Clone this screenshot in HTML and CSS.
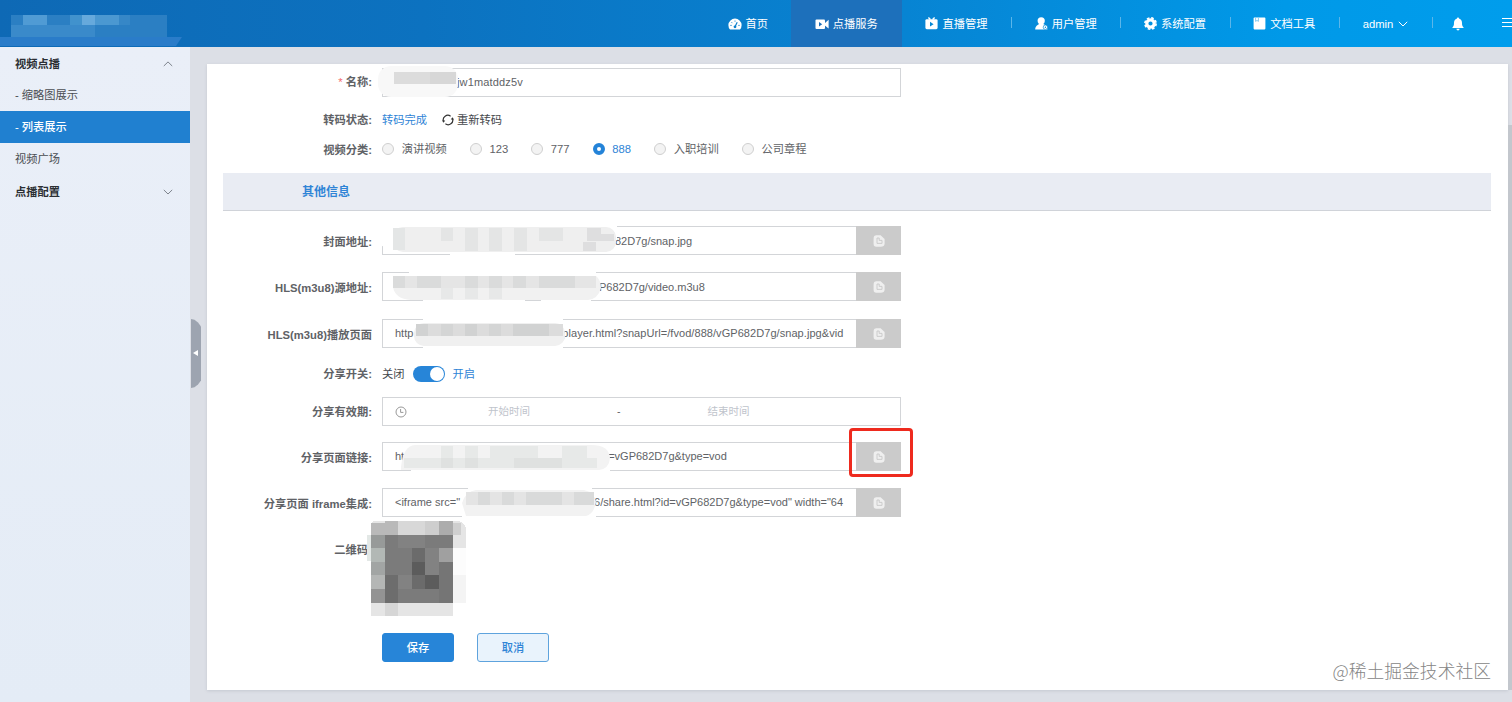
FILE: index.html
```html
<!doctype html>
<html lang="zh-CN">
<head>
    <meta charset="UTF-8">
    <title>点播服务</title>
    <link rel="stylesheet" href="styles.css">
</head>
<body>
    <svg width="0" height="0" class="defs">
        <symbol id="copy" viewBox="0 0 12 12">
            <path d="M3 0.2H7.6L11.6 4V8.4Q11.4 11.6 7.8 11.8H3.2Q0.6 11.6 0.6 9V3Q0.6 0.4 3 0.2Z" fill="#efefef"/>
            <path d="M4 3H6.2V5.4H9V8.4H4Z" fill="none" stroke="#c8c8c8" stroke-width="0.9"/>
        </symbol>
    </svg>
<!--    header-->
    <div class="header">
        <svg class="logo" width="184" height="47">
            <path d="M0 37H182L176 46H0Z" fill="#2a7cc9"/>
            <rect x="11" y="15" width="156" height="22" fill="#2b7fc3"/>
            <rect x="11" y="25" width="84" height="12" fill="#3a8aca"/>
            <rect x="23" y="15" width="24" height="10" fill="#509bd4"/>
            <rect x="70" y="15" width="12" height="10" fill="#4192cd"/>
            <rect x="82" y="15" width="13" height="10" fill="#66a9dc"/>
            <rect x="95" y="15" width="24" height="10" fill="#4b98d1"/>
            <rect x="119" y="15" width="11" height="10" fill="#3687c7"/>
        </svg>
        <div class="nav">
            <div class="nav-item first">
                <svg width="14" height="12" viewBox="0 0 14 12">
                    <path d="M2 11.5A6.6 6.6 0 1 1 12 11.5Z" fill="#fff"/>
                    <path d="M7 8.8L9.2 4.2" stroke="#0b7fcd" stroke-width="1.2"/>
                    <circle cx="7" cy="8.8" r="1.4" fill="#0b7fcd"/>
                    <path d="M2.4 7.4H3.6M3.6 4.3L4.4 5.1M7 2.6V3.6M10.4 7.4H11.6" stroke="#0b7fcd"/>
                </svg>
                <span>首页</span>
            </div>
            <div class="nav-item active">
                <svg width="14" height="12" viewBox="0 0 14 12">
                    <rect x="0.5" y="1.5" width="9.5" height="9.5" rx="1" fill="#fff"/>
                    <path d="M9.8 5.2L13.6 1.8V10.6L9.8 7.4Z" fill="#fff"/>
                    <path d="M4 4L7.2 6.2L4 8.4Z" fill="#1d6fba"/>
                </svg>
                <span>点播服务</span>
            </div>
            <div class="nav-item">
                <svg width="13" height="13" viewBox="0 0 13 13">
                    <path d="M3.4 0.6L5.4 2.6M9.6 0.6L7.6 2.6" stroke="#fff" stroke-width="1.4"/>
                    <rect x="0.4" y="2.2" width="12.2" height="10" rx="1.4" fill="#fff"/>
                    <path d="M5 4.8L8.6 7.2L5 9.6Z" fill="#0789d6"/>
                </svg>
                <span>直播管理</span>
            </div>
            <div class="nav-item line">
                <svg width="13" height="13" viewBox="0 0 13 13">
                    <circle cx="6.2" cy="3.8" r="3.6" fill="#fff"/>
                    <path d="M0.2 12.4C0.4 8.8 2.6 8.4 4.4 6.8H8C9.6 8 12 8.6 12.4 12.4Z" fill="#fff"/>
                    <circle cx="10.4" cy="10.2" r="2.2" fill="#fff" stroke="#058cda" stroke-width="0.7"/>
                    <circle cx="10.4" cy="10.2" r="0.7" fill="#058cda"/>
                </svg>
                <span>用户管理</span>
            </div>
            <div class="nav-item line">
                <svg width="13" height="13" viewBox="0 0 13 13">
                    <circle cx="6.5" cy="6.5" r="3.7" fill="none" stroke="#fff" stroke-width="3.2"/>
                    <circle cx="6.5" cy="6.5" r="5.6" fill="none" stroke="#fff" stroke-width="1.7" stroke-dasharray="2.6 1.8"/>
                </svg>
                <span>系统配置</span>
            </div>
            <div class="nav-item line">
                <svg width="13" height="13" viewBox="0 0 13 13">
                    <rect x="0.6" y="0.6" width="11.8" height="11.8" rx="0.8" fill="#fff"/>
                    <path d="M2.6 1V4.4L4 3.4L5.4 4.4V1" fill="none" stroke="#69bcea" stroke-width="0.8"/>
                </svg>
                <span>文档工具</span>
            </div>
            <div class="nav-item line user">
                <span>admin</span>
                <svg width="10" height="6" viewBox="0 0 10 6">
                    <path d="M0.8 0.8L5 5L9.2 0.8" fill="none" stroke="#fff"/>
                </svg>
            </div>
            <div class="nav-item line bell">
                <svg width="12" height="14" viewBox="0 0 12 14">
                    <path d="M6 0.5C6.6 0.5 7 1 7 1.6C9.2 2.2 10 4 10 6C10 8.8 10.6 9.4 11.6 10.4V11H0.4V10.4C1.4 9.4 2 8.8 2 6C2 4 2.8 2.2 5 1.6C5 1 5.4 0.5 6 0.5Z" fill="#fff"/>
                    <path d="M4.4 11.8H7.6A1.6 1.6 0 0 1 4.4 11.8Z" fill="#fff"/>
                </svg>
            </div>
            <div class="menu">
                <i></i>
                <i></i>
                <i></i>
            </div>
        </div>
    </div>

    <div class="wrap">
<!--        sidebar-->
        <div class="side">
            <div class="side-item title">
                <span>视频点播</span>
                <svg width="10" height="6" viewBox="0 0 10 6"><path d="M0.8 5L5 0.9L9.2 5" fill="none" stroke="#7d838c"/></svg>
            </div>
            <div class="side-item">- 缩略图展示</div>
            <div class="side-item on">- 列表展示</div>
            <div class="side-item">视频广场</div>
            <div class="side-item title">
                <span>点播配置</span>
                <svg width="10" height="6" viewBox="0 0 10 6"><path d="M0.8 0.9L5 5L9.2 0.9" fill="none" stroke="#7d838c"/></svg>
            </div>
        </div>

        <div class="main">
            <div class="handle"></div>
            <div class="card">
                <div class="row name">
                    <label><em>*</em> 名称:</label>
                    <div class="input">
                        <svg class="mask m-name" width="80" height="34">
                            <rect x="0" y="1" width="80" height="31" rx="13" fill="#f8f8f8"/>
                            <rect x="16" y="7" width="36" height="12" fill="#dcdcdc"/>
                            <rect x="52" y="7" width="26" height="12" fill="#d7d7d7"/>
                        </svg>
                        <span class="cut">jw1matddz5v</span>
                    </div>
                </div>
                <div class="row status">
                    <label>转码状态:</label>
                    <span class="blue">转码完成</span>
                    <svg class="refresh" width="12" height="12" viewBox="0 0 12 12">
                        <path d="M1.5 7.4A4.6 4.6 0 0 1 8.6 2.2M10.5 4.6A4.6 4.6 0 0 1 3.4 9.8" fill="none" stroke="#333" stroke-width="1.2"/>
                        <path d="M0 6.4H3.2L1.6 8.8ZM8.8 5.6H12L10.4 3.2Z" fill="#333"/>
                    </svg>
                    <span class="dark">重新转码</span>
                </div>
                <div class="row kind">
                    <label>视频分类:</label>
                    <div class="radios">
                        <span class="radio"><i></i>演讲视频</span>
                        <span class="radio"><i></i>123</span>
                        <span class="radio"><i></i>777</span>
                        <span class="radio checked"><i></i>888</span>
                        <span class="radio"><i></i>入职培训</span>
                        <span class="radio"><i></i>公司章程</span>
                    </div>
                </div>

                <div class="section">其他信息</div>

                <div class="row cover">
                    <label>封面地址:</label>
                    <div class="input">
                        <svg class="mask m-cover" width="236" height="33">
                            <path d="M0 0H236V16H12L0 23Z" fill="#fff"/>
                            <rect x="69" y="20" width="65" height="13" fill="#fff"/>
                            <rect x="12" y="3" width="223" height="25" rx="10" fill="#efefef"/>
                            <path d="M12 4H24V26H12Z" fill="#e4e6e6"/>
                            <path d="M60 4H72V17H60ZM84 4H97V27H84ZM108 4H121V27H108ZM133 4H146V27H133ZM158 4H182V17H158Z" fill="#e4e5e5"/>
                            <path d="M206 4H220V17H206ZM220 10H233V17H220ZM202 18H215V27H202Z" fill="#dededf"/>
                        </svg>
                        <span class="cut">82D7g/snap.jpg</span>
                    </div>
                    <button class="copy"><svg width="12" height="12"><use href="#copy"/></svg></button>
                </div>
                <div class="row hls">
                    <label>HLS(m3u8)源地址:</label>
                    <div class="input">
                        <svg class="mask m-hls" width="220" height="33">
                            <path d="M28 0H215V9H28ZM42 24H144V33H42ZM160 24H210V33H160Z" fill="#fff"/>
                            <path d="M12 6H215Q220 10 220 18Q217 29 207 30H30Q14 29 12 17Z" fill="#f1f1f1"/>
                            <path d="M12 6H215V18H12Z" fill="#e5e5e5"/>
                            <path d="M12 6H24V18H12ZM36 6H60V18H36ZM84 6H97V18H84ZM108 6H121V18H108ZM132 6H145V18H132ZM158 6H194V18H158Z" fill="#dadbdb"/>
                            <path d="M60 18H72V29H60ZM84 18H97V29H84ZM108 18H121V29H108Z" fill="#e7e8e8"/>
                        </svg>
                        <span class="cut">P682D7g/video.m3u8</span>
                    </div>
                    <button class="copy"><svg width="12" height="12"><use href="#copy"/></svg></button>
                </div>
                <div class="row play">
                    <label>HLS(m3u8)播放页面</label>
                    <div class="input">
                        <span>http</span>
                        <svg class="mask m-play" width="154" height="33">
                            <path d="M10 0H150V8H10ZM10 25H150V33H10Z" fill="#fff"/>
                            <rect x="1" y="6" width="151" height="23" rx="10" fill="#f0f0f0"/>
                            <path d="M3 7H150V19H3Z" fill="#dcdcdc"/>
                            <path d="M3 7H15V19H3ZM52 7H64V19H52ZM100 7H136V19H100Z" fill="#d1d2d2"/>
                            <path d="M28 7H40V19H28ZM76 7H88V19H76Z" fill="#d4d5d5"/>
                        </svg>
                        <span class="cut">player.html?snapUrl=/fvod/888/vGP682D7g/snap.jpg&amp;vid</span>
                    </div>
                    <button class="copy"><svg width="12" height="12"><use href="#copy"/></svg></button>
                </div>
                <div class="row switch-row">
                    <label>分享开关:</label>
                    <span class="dark">关闭</span>
                    <div class="switch"></div>
                    <span class="blue">开启</span>
                </div>
                <div class="row date">
                    <label>分享有效期:</label>
                    <div class="input range">
                        <svg width="12" height="12" viewBox="0 0 12 12">
                            <circle cx="6" cy="6" r="5" fill="none" stroke="#999"/>
                            <path d="M5.6 3V6.4H8.4" fill="none" stroke="#999"/>
                        </svg>
                        <span class="start">开始时间</span>
                        <span class="dash">-</span>
                        <span class="end">结束时间</span>
                    </div>
                </div>
                <div class="row share">
                    <label>分享页面链接:</label>
                    <div class="input">
                        <span>ht</span>
                        <svg class="mask m-share" width="209" height="33">
                            <path d="M10 20H209V33H10Z" fill="#fff"/>
                            <path d="M0 27Q2 6 14 5H190Q208 5 209 18Q208 29 198 30H0Z" fill="#f3f3f3"/>
                            <path d="M3 18H196V28H3ZM40 6H52V18H40ZM64 6H77V18H64ZM89 6H137V18H89ZM161 6H186V18H161Z" fill="#e7e9e8"/>
                            <path d="M40 18H52V28H40ZM64 18H77V28H64ZM113 18H161V28H113Z" fill="#dfe1e0"/>
                        </svg>
                        <span class="cut">=vGP682D7g&amp;type=vod</span>
                    </div>
                    <button class="copy">
                        <svg width="12" height="12"><use href="#copy"/></svg>
                        <i class="red-box"></i>
                    </button>
                </div>
                <div class="row iframe">
                    <label>分享页面 iframe集成:</label>
                    <div class="input">
                        <span>&lt;iframe src="</span>
                        <svg class="mask m-iframe" width="134" height="33">
                            <path d="M6 0H130V8H6ZM0 25H134V33H0Z" fill="#fff"/>
                            <path d="M0 17Q4 5 14 4H122Q132 6 134 16Q132 28 124 30H4Z" fill="#f2f2f2"/>
                            <path d="M4 6H128V19H4Z" fill="#e4e4e4"/>
                            <path d="M16 6H28V19H16ZM40 6H52V19H40ZM64 6H100V19H64ZM112 6H132V19H112Z" fill="#d9dada"/>
                        </svg>
                        <span class="cut">6/share.html?id=vGP682D7g&amp;type=vod" width="64</span>
                    </div>
                    <button class="copy"><svg width="12" height="12"><use href="#copy"/></svg></button>
                </div>
                <div class="row code">
                    <label>二维码</label>
                    <svg class="qr" width="99" height="96" viewBox="0 0 99 96" shape-rendering="crispEdges">
                        <path d="M0 14H4V40H0Z" fill="#e3e8e6"/>
                        <path d="M4 3Q5 0 8 0H92Q98 2 99 7V27H86V82H99V68H86V95H4Z" fill="#e5e5e5"/>
                        <path d="M86 27H99V68H86Z" fill="#fcfcfc"/>
                        <path d="M86 54H99V82H86Z" fill="#f4f4f4"/>
                        <path d="M4 2H18V14H4ZM18 0H31V14H18Z" fill="#b9b9b9"/>
                        <path d="M31 0H58V14H31Z" fill="#d8d8d8"/>
                        <path d="M58 0H72V14H58Z" fill="#cecece"/>
                        <path d="M72 0H86V14H72Z" fill="#acacac"/>
                        <path d="M86 2H94V14H86Z" fill="#cfcfcf"/>
                        <path d="M4 14H18V27H4Z" fill="#979a99"/>
                        <path d="M4 27H18V41H4Z" fill="#b2b8b5"/>
                        <path d="M4 41H18V54H4Z" fill="#a2a5a4"/>
                        <path d="M4 54H18V68H4Z" fill="#b4b6b5"/>
                        <path d="M4 68H18V82H4Z" fill="#939393"/>
                        <path d="M18 14H86V82H18Z" fill="#7b7b7b"/>
                        <path d="M18 54H31V82H18Z" fill="#6d6d6d"/>
                        <path d="M31 14H58V27H31ZM58 27H72V54H58ZM31 54H45V68H31Z" fill="#828282"/>
                        <path d="M45 27H58V41H45ZM45 54H58V68H45Z" fill="#6b6b6b"/>
                        <path d="M45 41H58V54H45ZM58 54H72V68H58Z" fill="#5c5c5c"/>
                        <path d="M72 27H86V41H72Z" fill="#a0a0a0"/>
                        <path d="M72 41H86V82H72Z" fill="#757575"/>
                        <path d="M18 82H31V95H18Z" fill="#d6d6d6"/>
                    </svg>
                </div>
                <div class="btns">
                    <button class="btn save">保存</button>
                    <button class="btn cancel">取消</button>
                </div>
            </div>
            <div class="scroll"></div>
        </div>
    </div>
    <div class="watermark">@稀土掘金技术社区</div>
</body>
</html>
```
FILE: styles.css
```css
* {
    margin: 0;
    padding: 0;
    box-sizing: border-box;
}
body {
    width: 1512px;
    height: 702px;
    overflow: hidden;
    font: 11.25px/16px "Liberation Sans", "Noto Sans CJK SC", sans-serif;
    color: #606266;
    background: #dcdfe6;
}
i, em {
    font-style: normal;
}
svg {
    display: block;
    flex-shrink: 0;
}
button {
    font: inherit;
    border: none;
}
.defs {
    position: absolute;
}

/*header start*/
.header {
    display: flex;
    justify-content: space-between;
    height: 47px;
    background: linear-gradient(90deg, #0e69b5 0%, #0c72c0 28%, #0784d3 60%, #0099e8 85%, #009dec 100%);
    box-shadow: 0 1px 1px #b9cfe6;
}
.nav {
    display: flex;
    color: #fff;
}
.nav-item {
    position: relative;
    display: flex;
    align-items: center;
    justify-content: center;
    gap: 4px;
    width: 109.3px;
    height: 47px;
}
.nav-item.first {
    width: 86px;
}
.nav-item.active {
    width: 111px;
    background: #1d70bb;
}
.nav-item.user {
    width: 93px;
    gap: 5px;
}
.nav-item.bell {
    width: 53px;
    padding-right: 1px;
}
.nav-item.line::before {
    content: "";
    position: absolute;
    left: 0;
    top: 17px;
    width: 1px;
    height: 11px;
    background: #5bb6ea;
}
.menu {
    width: 27px;
    padding: 18px 0 0 17px;
}
.menu i {
    display: block;
    height: 1px;
    margin-bottom: 3px;
    background: #fff;
}
/*header end*/

.wrap {
    display: flex;
    height: 655px;
}

/*sidebar start*/
.side {
    width: 190px;
    background: linear-gradient(180deg, #eaeff8, #e4ecf6);
    color: #4a4d52;
}
.side-item {
    display: flex;
    align-items: center;
    justify-content: space-between;
    height: 32px;
    padding: 0 17px 0 15px;
}
.side-item.title {
    height: 33px;
    font-weight: bold;
    color: #2b2e33;
}
.side-item.title:first-child {
    height: 32px;
    padding-top: 1px;
}
.side-item.on {
    color: #fff;
    font-weight: 500;
    background: #2080d0;
}
/*sidebar end*/

/*main start*/
.main {
    position: relative;
    flex: 1;
    display: flex;
    padding: 17px 0 12px 17px;
    background: #dcdfe6;
}
.handle {
    position: absolute;
    left: 1px;
    top: 272px;
    width: 10px;
    height: 69px;
    background: #9da4b0;
    clip-path: polygon(0 0, 35% 1%, 70% 5%, 100% 11%, 100% 89%, 70% 95%, 35% 99%, 0 100%);
}
.handle::after {
    content: "";
    position: absolute;
    left: 2px;
    top: 31px;
    border: 3px solid transparent;
    border-left: none;
    border-right: 5px solid #fff;
}
.card {
    width: 1301px;
    padding: 3px 17px 0 16px;
    background: #fff;
    box-shadow: 0 1px 3px #c4c8d0;
}
.scroll {
    width: 4px;
    height: 565px;
    margin-top: 61px;
    background: #c3c7cd;
}
/*main end*/

/*form start*/
.row {
    display: flex;
    align-items: center;
    height: 29px;
}
.row label {
    flex-shrink: 0;
    width: 149px;
    margin-right: 10px;
    text-align: right;
    font-weight: bold;
    white-space: nowrap;
    padding-top: 2px;
}
.row label em {
    color: #f56c6c;
    font-weight: normal;
}
.row.name {
    height: 30px;
}
.row.name label {
    padding-top: 0;
}
.row.status {
    margin-top: 8px;
}
.row.status label,
.row.switch-row label,
.row.date label {
    padding-top: 0;
}
.input {
    display: flex;
    align-items: center;
    width: 519px;
    height: 29px;
    padding: 0 12px;
    border: 1px solid #d3d5d8;
    background: #fff;
    font-size: 11px;
    white-space: pre;
}
.copy {
    position: relative;
    display: flex;
    align-items: center;
    justify-content: center;
    width: 45px;
    height: 29px;
    background: #cbcbcb;
}
.cover .input,
.hls .input,
.play .input,
.share .input,
.iframe .input {
    width: 474px;
    border-right: none;
}
.share .input span,
.iframe .input span,
.play .input span,
.range span {
    margin-top: -1px;
}
.mask {
    position: relative;
}
.cut {
    flex: 1;
    min-width: 0;
    overflow: hidden;
    margin-left: -2px;
}
.name .cut {
    margin-left: -1px;
    letter-spacing: 0.15px;
}
.m-name {
    margin-left: -17px;
}
.m-cover,
.m-hls {
    margin-left: -14px;
}
.m-play {
    margin-left: 0;
}
.play .cut {
    margin-left: -5px;
    letter-spacing: 0.06px;
}
.m-share {
    margin-left: -3px;
}
.m-iframe {
    margin-left: 2px;
}
.blue {
    color: #2f84d6;
}
.dark {
    color: #45484c;
}
.refresh {
    margin: 0 3px 0 15px;
}
.row.kind label {
    padding-top: 3px;
}
.radios {
    display: flex;
    gap: 23px;
    margin-top: 1px;
}
.radio {
    display: flex;
    align-items: center;
    gap: 7.7px;
}
.radio i {
    width: 12px;
    height: 12px;
    border: 1px solid #cfcfcf;
    border-radius: 50%;
    background: #f3f3f3;
}
.radio.checked {
    color: #2f84d6;
}
.radio.checked i {
    border: 4px solid #2483d8;
    background: #fff;
}
.section {
    height: 38px;
    margin-top: 10px;
    padding-left: 79px;
    border-bottom: 1px solid #d0d3d9;
    line-height: 38px;
    font-size: 12px;
    font-weight: bold;
    color: #2f84d6;
    background: #e9ecf3;
}
.row.cover {
    margin-top: 15px;
}
.row.hls {
    margin-top: 17px;
}
.row.play {
    margin-top: 18px;
}
.row.switch-row {
    height: 20px;
    margin-top: 16px;
}
.switch {
    width: 32px;
    height: 16px;
    margin: 0 8px;
    padding: 1px;
    border-radius: 8px;
    background: #2785d8;
}
.switch::after {
    content: "";
    display: block;
    width: 14px;
    height: 14px;
    margin-left: auto;
    border-radius: 50%;
    background: #fff;
}
.row.date {
    margin-top: 13px;
}
.range {
    color: #c0c4cc;
    font-size: 10.5px;
}
.range .start {
    margin-left: 81px;
}
.range .dash {
    margin-left: 87px;
    color: #606266;
}
.range .end {
    margin-left: 87px;
}
.row.share {
    margin-top: 16px;
}
.red-box {
    position: absolute;
    left: -7px;
    top: -14px;
    z-index: 9;
    width: 64px;
    height: 49px;
    border: 3px solid #ee2a1e;
    border-radius: 4px;
}
.row.iframe {
    margin-top: 17px;
}
.row.code {
    align-items: flex-start;
    height: 96px;
    margin-top: 4px;
}
.row.code label {
    width: 145px;
    margin-right: 0;
    padding-top: 21px;
}
.qr {
    position: relative;
    margin-left: -1px;
}
.btns {
    display: flex;
    gap: 23px;
    margin: 16px 0 0 159px;
}
.btn {
    width: 72px;
    height: 29px;
    border: 1px solid #2785d8;
    border-radius: 3px;
    color: #fff;
    font-weight: 500;
    background: #2785d8;
}
.btn.cancel {
    border-color: #5ea3dd;
    color: #2f84d6;
    background: #e9f3fc;
}
/*form end*/

.watermark {
    position: absolute;
    right: 21px;
    bottom: 20px;
    font: 300 17.8px/24px "Noto Sans CJK SC", sans-serif;
    color: #858585;
}
```
